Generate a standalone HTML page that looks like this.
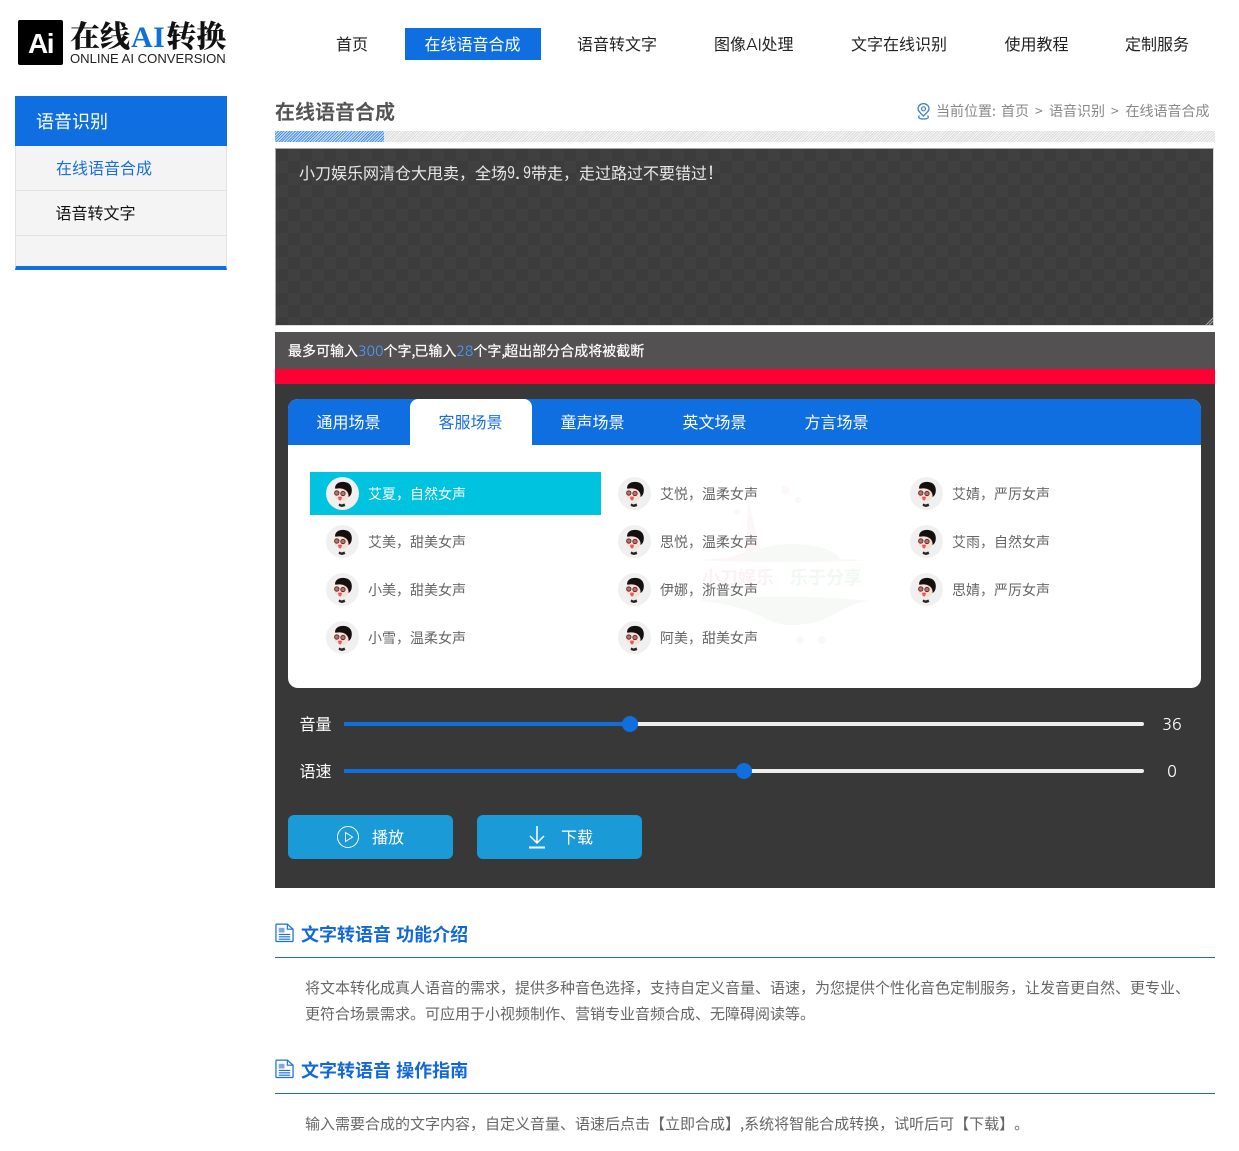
<!DOCTYPE html>
<html lang="zh-CN"><head><meta charset="utf-8"><title>在线语音合成</title>
<style>
*{margin:0;padding:0;box-sizing:border-box;text-spacing-trim:space-all}
html,body{width:1239px;height:1151px;overflow:hidden;background:#fff}
body{position:relative;font-family:"WenQuanYi Zen Hei","Noto Sans CJK SC",sans-serif;font-size:16px;color:#333}
.a{position:absolute;white-space:nowrap}
.nav{top:27px;height:32px;line-height:32px;color:#222;font-size:16px}
.v{position:absolute;width:291px;height:43px;line-height:45px;font-size:14px;color:#666;padding-left:58px}
.v svg{position:absolute;left:16px;top:5px;width:33px;height:33px}
.v.on{background:#00c3e0;color:#fff}
.tab{position:absolute;top:0;width:122px;height:46px;line-height:44px;text-align:center;color:#fff;font-size:16px;padding-right:1px}
.tab.on{background:#fff;color:#1a6fe0;border-radius:8px 8px 0 0}
.track{position:absolute;left:344px;width:800px;height:4px;background:#eee;border-radius:2px}
.fill{position:absolute;left:344px;height:4px;background:#106fde}
.thumb{position:absolute;width:16px;height:16px;border-radius:50%;background:#106fde}
.btn{position:absolute;top:815px;width:165px;height:44px;background:#1a9ad6;border-radius:6px;color:#fff;line-height:43px;font-size:16px}
.h2{position:absolute;left:301px;font-size:18px;font-weight:bold;color:#1268d8;line-height:24px;white-space:nowrap;word-spacing:1px}
.ln{position:absolute;left:275px;width:940px;height:1px;background:#2268c4}
.p{position:absolute;left:305px;width:885px;font-size:15px;line-height:26px;color:#666}
.bc{position:absolute;top:101px;font-size:14px;line-height:20px;color:#888;white-space:nowrap}
.n{color:#4a9bff;-webkit-text-stroke:0;font-family:NanumGothic,sans-serif}
.c{margin-right:-1px}
</style></head><body>
<svg width="0" height="0" style="position:absolute"><defs>
<symbol id="av" viewBox="0 0 33 33">
<circle cx="16.5" cy="16.5" r="16.5" fill="#f0f0f0"/>
<path d="M9 11.500C9 6.500 13.500 4.500 18.500 5C23.500 5.500 26 9 25.800 13.500C25.600 17 24.500 19 22.500 20C22.500 16.500 20.500 14 18 13C14.500 12 11.500 12 9 11.500Z" fill="#151010"/>
<path d="M7.500 15C8 12 11 11 15 11.500C19.500 12 22.500 15 22.500 18.500C22.500 22 19.500 24.500 15.500 24C11 23.500 7 19.500 7.500 15Z" fill="#f9e0d2"/>
<circle cx="10.800" cy="16" r="2.200" fill="#c96a6a" stroke="#3a2a2a" stroke-width=".8"/>
<circle cx="17" cy="16.500" r="2.200" fill="#c96a6a" stroke="#3a2a2a" stroke-width=".8"/>
<path d="M12 20q2 -1 4 0q-.5 3.500-2 3.500t-2-3.500Z" fill="#e8566a"/>
<path d="M13 26.500l2.500 1 3-1 .8 2.500-3.300 1-3.300-1Z" fill="#222"/>
<path d="M14 24.500l2 1.300 2-1.300 0 1.800-2 1-2-1Z" fill="#f7e4d8"/>
</symbol>
<symbol id="doc" viewBox="0 0 20 20">
<path d="M1 1.500Q1 .7 1.800 .7H13L19 6V18Q19 19 18 19H2Q1 19 1 18Z" fill="#fff" stroke="#1a6fd8" stroke-width="1.300"/>
<path d="M13 1V6H19" fill="none" stroke="#1a6fd8" stroke-width="1.200"/>
<rect x="4" y="4.500" width="6" height="5" fill="#7fa8e0"/>
<path d="M4 11.500H16M4 14H16M4 16.500H16" stroke="#1a6fd8" stroke-width="1.200"/>
</symbol>
</defs></svg>

<!-- logo -->
<div class="a" style="left:18px;top:20px;width:45px;height:45px;background:#000;border-radius:2px;color:#fff;font-family:'Liberation Sans',sans-serif;font-weight:bold;font-size:28px;line-height:47px;text-align:center;letter-spacing:-1.500px">Ai</div>
<div class="a" style="left:70px;top:15px;font-family:'Noto Serif CJK SC',serif;font-weight:900;font-size:30px;line-height:38px;color:#111">在线<span style="color:#0f6fe0;font-family:'Liberation Serif',serif;font-weight:bold;letter-spacing:.5px;margin-left:1px;margin-right:1px">AI</span>转换</div>
<div class="a" style="left:70px;top:51px;font-family:'Liberation Sans',sans-serif;font-size:13.100px;line-height:16px;color:#222">ONLINE AI CONVERSION</div>

<!-- nav -->
<div class="a nav" style="left:336px">首页</div>
<div class="a" style="left:405px;top:28px;width:136px;height:32px;line-height:30px;background:#0f6fe0;color:#fff;text-align:center;font-size:16px;padding-right:1px">在线语音合成</div>
<div class="a nav" style="left:577px">语音转文字</div>
<div class="a nav" style="left:714px">图像<span style="font-family:NanumGothic,sans-serif">AI</span>处理</div>
<div class="a nav" style="left:851px">文字在线识别</div>
<div class="a nav" style="left:1004.500px">使用教程</div>
<div class="a nav" style="left:1125px">定制服务</div>

<!-- sidebar -->
<div class="a" style="left:15px;top:96px;width:212px;height:174px;background:#f4f4f4;border:1px solid #e2e2e2;border-top:0;border-bottom:4px solid #0f6fe0"></div>
<div class="a" style="left:15px;top:96px;width:212px;height:50px;background:#0f6fe0;color:#fff;font-size:18px;line-height:51px;padding-left:21px">语音识别</div>
<div class="a" style="left:16px;top:146px;width:210px;height:45px;line-height:42px;border-bottom:1px solid #e2e2e2;padding-left:40px;color:#1a6fe0;font-size:16px">在线语音合成</div>
<div class="a" style="left:16px;top:191px;width:210px;height:45px;line-height:42px;border-bottom:1px solid #e2e2e2;padding-left:39.500px;color:#111;font-size:16px">语音转文字</div>

<!-- title -->
<div class="a" style="left:275px;top:97px;font-size:20px;font-weight:bold;color:#555;line-height:28px">在线语音合成</div>
<svg class="a" style="left:916px;top:103px" width="15" height="17" viewBox="0 0 15 17"><path d="M7.500 13C4.500 10 2 8 2 5.800A5.500 5.200 0 0 1 13 5.800C13 8 10.500 10 7.500 13Z" fill="none" stroke="#3f86c6" stroke-width="1.300"/><circle cx="7.500" cy="5.800" r="2" fill="none" stroke="#3f86c6" stroke-width="1.200"/><path d="M3.500 12.500C1.500 14.500 3 16 7.500 16S13.500 14.500 11.500 12.500" fill="none" stroke="#3f86c6" stroke-width="1.200"/></svg>
<div class="bc" style="left:936px">当前位置:</div>
<div class="bc" style="left:1001px">首页</div>
<div class="bc" style="left:1035px">&gt;</div>
<div class="bc" style="left:1049px">语音识别</div>
<div class="bc" style="left:1111px">&gt;</div>
<div class="bc" style="left:1125.500px">在线语音合成</div>
<div class="a" style="left:275px;top:131px;width:940px;height:11px;background:repeating-linear-gradient(135deg,#dcdcdc 0,#dcdcdc 1px,#f6f6f6 1px,#f6f6f6 2px)"></div>
<div class="a" style="left:275px;top:131px;width:109px;height:11px;background:repeating-linear-gradient(135deg,#4a90e8 0,#4a90e8 1px,#cfe3fa 1px,#cfe3fa 2px)"></div>

<!-- textarea -->
<div class="a" style="left:275px;top:148px;width:939px;height:178px;border:1px solid #a8a8a8;border-right-color:#ddd;border-bottom-color:#ddd;background-color:#3c3c3c;background-image:conic-gradient(#404040 25%,#3c3c3c 0 50%,#404040 0 75%,#3c3c3c 0);background-size:24px 24px;color:#e8e8e8;font-family:monospace;font-size:16px;line-height:24px;padding:12px 23px">小刀娱乐网清仓大甩卖，全场<span style="font-family:IPAGothic,monospace">9.9</span>带走，走过路过不要错过<span style="font-family:IPAGothic,monospace">!</span></div>
<svg class="a" style="left:1205px;top:317px" width="8" height="8"><path d="M1 8L8 1M4 8L8 4" stroke="#aaa"/></svg>

<!-- notice -->
<div class="a" style="left:275px;top:332px;width:940px;height:37px;background:#545152;color:#fff;font-size:14px;line-height:38px;padding-left:13px;-webkit-text-stroke:.2px #fff">最多可输入<span class="n">300</span>个字<span class="c">,</span>已输入<span class="n">28</span>个字<span class="c">,</span>超出部分合成将被截断</div>
<div class="a" style="left:275px;top:369px;width:940px;height:15px;background:#f03"></div>

<!-- panel -->
<div class="a" style="left:275px;top:384px;width:940px;height:504px;background:#383838"></div>
<div class="a" style="left:288px;top:399px;width:913px;height:289px;background:#fff;border-radius:10px;overflow:hidden;white-space:normal">
  <div style="position:absolute;left:0;top:0;width:913px;height:46px;background:#0f6fe0"></div>
  <div class="tab" style="left:0">通用场景</div>
  <div class="tab on" style="left:122px">客服场景</div>
  <div class="tab" style="left:244px">童声场景</div>
  <div class="tab" style="left:366px">英文场景</div>
  <div class="tab" style="left:488px">方言场景</div>
  <svg style="position:absolute;left:400px;top:80px" width="200" height="170" viewBox="0 0 200 170">
    <g opacity=".05">
      <path d="M60 20L72 70L62 72L95 78C125 80 150 80 182 81C140 84 60 84 9 81C30 80 50 78 58 72Z" fill="#e2607a"/>
      <path d="M57 80C70 60 140 60 152 80C120 84 90 84 57 80Z" fill="#5fa05f"/>
      <path d="M9 122C70 116 120 116 182 122C150 125 145 147 100 146C75 145 70 126 9 122Z" fill="#5fa05f"/>
      <circle cx="97" cy="11" r="4" fill="#e2607a"/><circle cx="110" cy="21" r="3" fill="#e2607a"/><circle cx="49" cy="33" r="3" fill="#5fa05f"/><circle cx="112" cy="161" r="4" fill="#e2607a"/><circle cx="134" cy="161" r="4" fill="#5fa05f"/>
    </g>
    <text x="14" y="105" font-size="18" font-weight="bold" fill="#e2607a" opacity=".08">小刀娱乐</text>
    <text x="102" y="105" font-size="18" font-weight="bold" fill="#5fa05f" opacity=".08">乐于分享</text>
  </svg>
</div>
<div id="voices">
<div class="v on" style="left:310px;top:472px"><svg><use href="#av"/></svg>艾夏，自然女声</div>
<div class="v" style="left:310px;top:520px"><svg><use href="#av"/></svg>艾美，甜美女声</div>
<div class="v" style="left:310px;top:568px"><svg><use href="#av"/></svg>小美，甜美女声</div>
<div class="v" style="left:310px;top:616px"><svg><use href="#av"/></svg>小雪，温柔女声</div>
<div class="v" style="left:602px;top:472px"><svg><use href="#av"/></svg>艾悦，温柔女声</div>
<div class="v" style="left:602px;top:520px"><svg><use href="#av"/></svg>思悦，温柔女声</div>
<div class="v" style="left:602px;top:568px"><svg><use href="#av"/></svg>伊娜，浙普女声</div>
<div class="v" style="left:602px;top:616px"><svg><use href="#av"/></svg>阿美，甜美女声</div>
<div class="v" style="left:894px;top:472px"><svg><use href="#av"/></svg>艾婧，严厉女声</div>
<div class="v" style="left:894px;top:520px"><svg><use href="#av"/></svg>艾雨，自然女声</div>
<div class="v" style="left:894px;top:568px"><svg><use href="#av"/></svg>思婧，严厉女声</div>
</div>

<!-- sliders -->
<div class="a" style="left:299.500px;top:711px;color:#fff;line-height:24px">音量</div>
<div class="track" style="top:722px"></div><div class="fill" style="top:722px;width:286px"></div><div class="thumb" style="left:622px;top:716px"></div>
<div class="a" style="left:1162px;width:20px;top:713px;color:#fff;line-height:24px;text-align:center;font-family:NanumGothic,sans-serif">36</div>
<div class="a" style="left:299.500px;top:758px;color:#fff;line-height:24px">语速</div>
<div class="track" style="top:769px"></div><div class="fill" style="top:769px;width:400px"></div><div class="thumb" style="left:736px;top:763px"></div>
<div class="a" style="left:1162px;width:20px;top:760px;color:#fff;line-height:24px;text-align:center;font-family:NanumGothic,sans-serif">0</div>

<!-- buttons -->
<div class="btn" style="left:288px;padding-left:84px">播放</div>
<svg class="a" style="left:336px;top:825px" width="24" height="24" viewBox="0 0 24 24"><circle cx="12" cy="12" r="10.500" fill="none" stroke="#fff" stroke-width="1"/><path d="M9.500 7.500L16.500 12L9.500 16.500Z" fill="none" stroke="#fff" stroke-width="1"/></svg>
<div class="btn" style="left:477px;padding-left:84px">下载</div>
<svg class="a" style="left:528px;top:825px" width="18" height="24" viewBox="0 0 18 24"><path d="M9 1V18M2 11L9 18L16 11" fill="none" stroke="#fff" stroke-width="1.500"/><path d="M1 22.500H17" stroke="#fff" stroke-width="2"/></svg>

<!-- sections -->
<svg class="a" style="left:275px;top:923px" width="19" height="20"><use href="#doc"/></svg>
<div class="h2" style="top:922px">文字转语音 功能介绍</div>
<div class="ln" style="top:957px"></div>
<div class="p" style="top:975px">将文本转化成真人语音的需求，提供多种音色选择，支持自定义音量、语速，为您提供个性化音色定制服务，让发音更自然、更专业、更符合场景需求。可应用于小视频制作、营销专业音频合成、无障碍阅读等。</div>
<svg class="a" style="left:275px;top:1059px" width="19" height="20"><use href="#doc"/></svg>
<div class="h2" style="top:1058px">文字转语音 操作指南</div>
<div class="ln" style="top:1093px"></div>
<div class="p" style="top:1111px">输入需要合成的文字内容，自定义音量、语速后点击【立即合成】,系统将智能合成转换，试听后可【下载】。</div>
</body></html>
